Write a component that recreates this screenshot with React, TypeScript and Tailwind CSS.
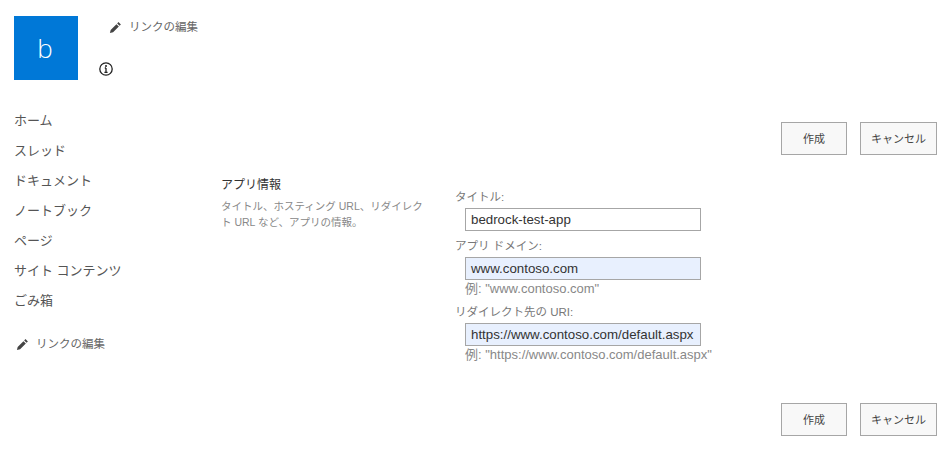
const navItems = ["ホーム", "スレッド", "ドキュメント", "ノートブック", "ページ", "サイト コンテンツ", "ごみ箱"];

const font = "font-['Liberation_Sans','Noto_Sans_CJK_JP',sans-serif]";

function EditIcon() {
  return (
    <svg viewBox="0 0 14 14" className="h-[13px] w-[13px] text-[#444]" fill="currentColor">
      <path d="M10.2 1.2 12.8 3.8 11.4 5.2 8.8 2.6ZM8 3.4 10.6 6 4.4 12.2 1 13 1.8 9.6Z" />
    </svg>
  );
}

function EditLink() {
  return (
    <a className="flex items-center gap-[7px] text-[11.5px] leading-4 text-[#666]">
      <EditIcon />
      リンクの編集
    </a>
  );
}

function Buttons() {
  return (
    <div className="flex justify-end gap-[13px] pr-[15px]">
      <button className="h-[33px] w-[66px] border border-[#a6a6a6] bg-[#f8f8f8] pt-[2px] text-[11px] text-[#444]">作成</button>
      <button className="h-[33px] w-[77px] border border-[#a6a6a6] bg-[#f8f8f8] pt-[2px] text-[11px] text-[#444]">キャンセル</button>
    </div>
  );
}

function Field({ label, value, hint, filled }: { label: string; value: string; hint?: string; filled?: boolean }) {
  return (
    <div>
      <div className="text-[11.5px] leading-[18px] text-[#777]">{label}</div>
      <div className="pl-[10px] pt-[2px]">
        <div
          className={`flex h-[23px] w-[236px] items-center overflow-hidden border border-[#a6a6a6] pl-[5px] text-[13.3px] whitespace-nowrap text-[#333] ${filled ? "bg-[#e8f0fe]" : "bg-white"}`}
        >
          {value}
        </div>
        {hint && <div className="pt-[1px] text-[13px] leading-[16px] text-[#888]">{hint}</div>}
      </div>
    </div>
  );
}

export default function App() {
  return (
    <div className={`h-[470px] w-[952px] overflow-hidden bg-white ${font}`}>
      {/* header */}
      <div className="flex pl-[14px] pt-[16px]">
        <div className="flex h-16 w-16 items-center justify-center bg-[#0078d7] pr-[2px] font-['Open_Sans',sans-serif] text-[26px] font-light text-white">
          b
        </div>
        <div className="pl-[21px]">
          <div className="pl-[10px] pt-[3px]">
            <EditLink />
          </div>
          <svg viewBox="0 0 14 14" className="mt-[27px] h-[14px] w-[14px] text-[#222]" fill="none" stroke="currentColor">
            <circle cx="7" cy="7" r="6.2" strokeWidth="1.3" />
            <path d="M7 6v4.2M5.4 10.4h3.2M5.8 6h1.2" strokeWidth="1.3" />
            <circle cx="7" cy="4" r="1" fill="currentColor" stroke="none" />
          </svg>
        </div>
      </div>

      <div className="flex pt-[25px]">
        {/* left nav */}
        <div className="w-[221px] pl-[14px] pt-[1px]">
          {navItems.map((item) => (
            <div key={item} className="h-[30px] text-[13px] leading-[30px] text-[#555]">
              {item}
            </div>
          ))}
          <div className="pl-[2px] pt-[20px]">
            <EditLink />
          </div>
        </div>

        {/* main */}
        <div className="flex-1 pt-[17px]">
          <Buttons />
          <div className="flex pt-[20px]">
            <div className="w-[234px] pt-[1px]">
              <div className="text-[12px] leading-[18px] text-[#333]">アプリ情報</div>
              <p className="w-[210px] pt-[4px] text-[10.5px] leading-[16px] text-[#888]">
                タイトル、ホスティング URL、リダイレクト URL など、アプリの情報。
              </p>
            </div>
            <div className="flex flex-col gap-[6px] pt-[13px]">
              <Field label="タイトル:" value="bedrock-test-app" />
              <Field label="アプリ ドメイン:" value="www.contoso.com" hint='例: "www.contoso.com"' filled />
              <Field
                label="リダイレクト先の URI:"
                value="https://www.contoso.com/default.aspx"
                hint='例: "https://www.contoso.com/default.aspx"'
                filled
              />
            </div>
          </div>
          <div className="pt-[40px]">
            <Buttons />
          </div>
        </div>
      </div>
    </div>
  );
}
